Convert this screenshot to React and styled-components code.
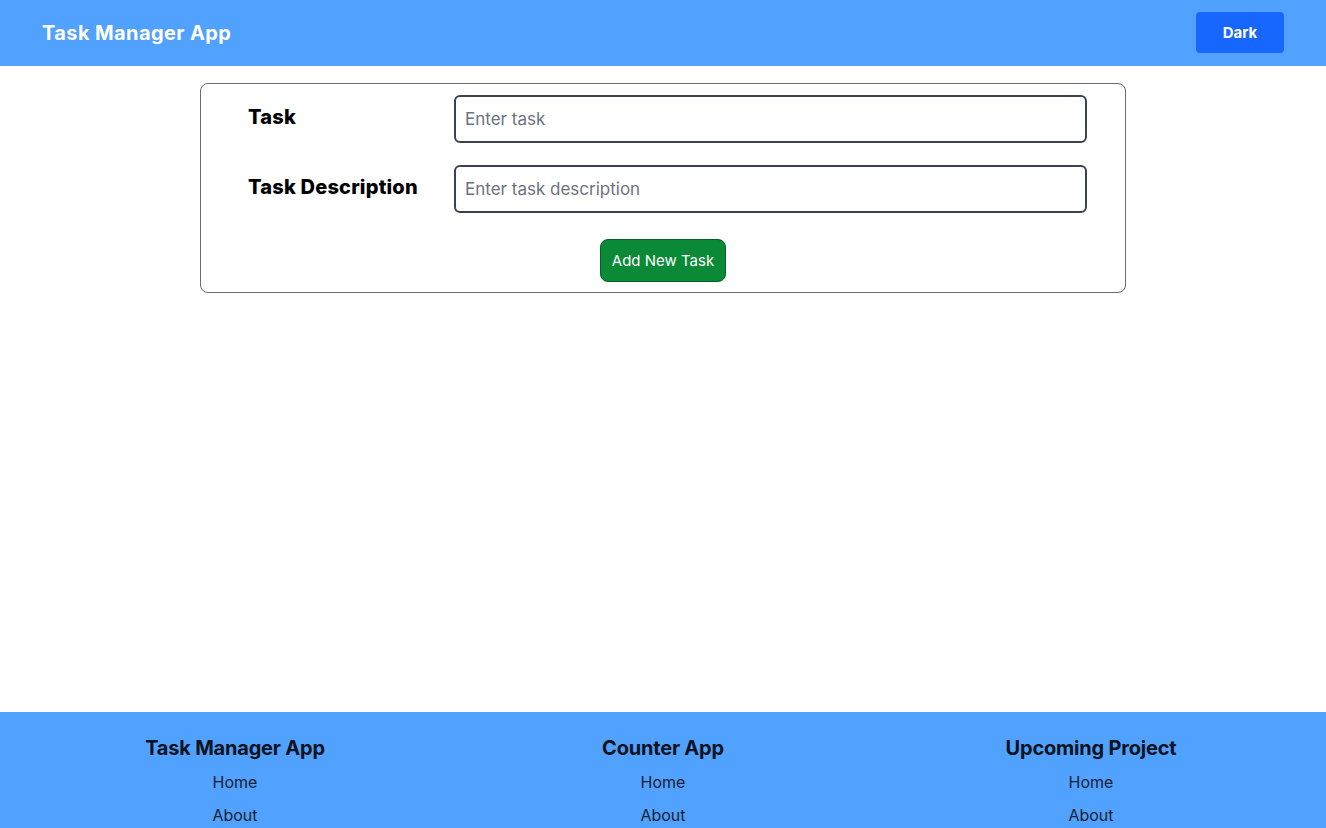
import React, { useState } from 'react';
import styled, { createGlobalStyle } from 'styled-components';

const GlobalStyle = createGlobalStyle`
  * {
    box-sizing: border-box;
  }
  body {
    margin: 0;
    font-family: Inter, "Noto Sans", Arial, sans-serif;
    background: #ffffff;
    color: #000;
  }
`;

const footerColumns = [
  { title: 'Task Manager App', links: ['Home', 'About', 'Contact'] },
  { title: 'Counter App', links: ['Home', 'About', 'Contact'] },
  { title: 'Upcoming Project', links: ['Home', 'About', 'Contact'] },
];

const App = () => {
  const [task, setTask] = useState('');
  const [description, setDescription] = useState('');

  return (
    <>
      <GlobalStyle />
      {/* Navbar */}
      <Navbar>
        <Brand>Task Manager App</Brand>
        <ModeButton>Dark</ModeButton>
      </Navbar>

      {/* Task form */}
      <Main>
        <FormCard>
          <FieldRow>
            <Label>Task</Label>
            <Input
              type="text"
              placeholder="Enter task"
              value={task}
              onChange={(e) => setTask(e.target.value)}
            />
          </FieldRow>
          <FieldRow>
            <Label>Task Description</Label>
            <Input
              type="text"
              placeholder="Enter task description"
              value={description}
              onChange={(e) => setDescription(e.target.value)}
            />
          </FieldRow>
          <ButtonRow>
            <AddButton>Add New Task</AddButton>
          </ButtonRow>
        </FormCard>
      </Main>

      {/* Footer */}
      <Footer>
        {footerColumns.map((col) => (
          <FooterColumn key={col.title}>
            <FooterTitle>{col.title}</FooterTitle>
            {col.links.map((link) => (
              <FooterLink key={link}>{link}</FooterLink>
            ))}
          </FooterColumn>
        ))}
      </Footer>
    </>
  );
};

const Navbar = styled.nav`
  height: 66px;
  background-color: #51a1fe;
  display: flex;
  align-items: center;
  justify-content: space-between;
  padding: 0 42px;
`;

const Brand = styled.h1`
  margin: 0;
  color: #ffffff;
  font-size: 20px;
  font-weight: 700;
  letter-spacing: 0.4px;
`;

const ModeButton = styled.button`
  width: 88px;
  height: 41px;
  margin-top: -2px;
  border: none;
  border-radius: 4px;
  background-color: #1766fd;
  color: #ffffff;
  font-family: Inter, Arial, sans-serif;
  font-size: 15px;
  font-weight: 700;
  cursor: pointer;
`;

const Main = styled.main`
  min-height: 646px;
  padding-top: 17px;
`;

const FormCard = styled.div`
  width: 926px;
  margin: 0 auto;
  border: 1px solid #6b6b6b;
  border-radius: 8px;
  padding: 11px 38px 10px 47px;
  display: flex;
  flex-direction: column;
  gap: 22px;
`;

const FieldRow = styled.div`
  display: grid;
  grid-template-columns: 206px 1fr;
  align-items: center;
`;

const Label = styled.label`
  font-size: 20px;
  font-weight: 800;
  letter-spacing: 0.2px;
  color: #000;
  margin-top: -5px;
`;

const Input = styled.input`
  height: 48px;
  width: 100%;
  border: 2px solid #3c4250;
  border-radius: 6px;
  padding: 0 9px;
  font-family: Inter, Arial, sans-serif;
  font-size: 17px;
  color: #222;
  outline: none;

  &::placeholder {
    color: #6b7280;
  }
`;

const ButtonRow = styled.div`
  display: flex;
  justify-content: center;
  padding-right: 9px;
  margin-top: 4px;
`;

const AddButton = styled.button`
  width: 126px;
  height: 43px;
  background-color: #0a8a36;
  border: 1px solid #065f24;
  border-radius: 8px;
  color: #ffffff;
  font-family: Inter, Arial, sans-serif;
  font-size: 15px;
  cursor: pointer;
`;

const Footer = styled.footer`
  background-color: #51a1fe;
  display: grid;
  grid-template-columns: repeat(3, 1fr);
  padding: 24px 21px 20px;
`;

const FooterColumn = styled.div`
  display: flex;
  flex-direction: column;
  align-items: center;
`;

const FooterTitle = styled.h3`
  margin: 0 0 6px;
  font-size: 20px;
  font-weight: 700;
  color: #0b1220;
  letter-spacing: -0.2px;
`;

const FooterLink = styled.a`
  font-size: 16px;
  color: #1a2233;
  line-height: 33px;
  text-decoration: none;
  cursor: pointer;
`;

export default App;
